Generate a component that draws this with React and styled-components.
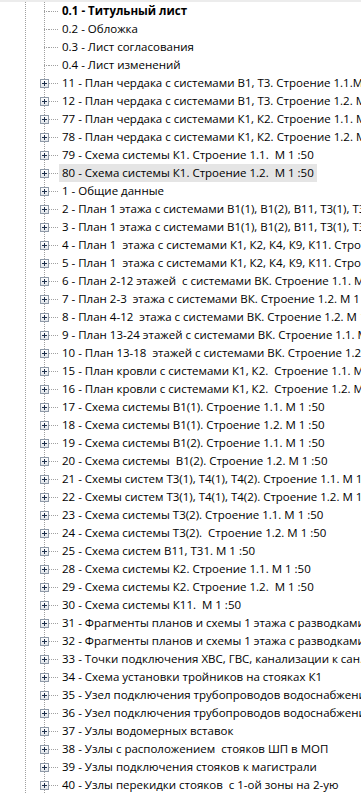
import React from "react";
import styled, { createGlobalStyle } from "styled-components";

const GlobalStyle = createGlobalStyle`
  html, body {
    margin: 0;
    padding: 0;
    background: #ffffff;
    overflow: hidden;
  }
`;

const Browser = styled.div`
  width: 361px;
  height: 795px;
  overflow: hidden;
  background: #ffffff;
  font-family: "Open Sans", "Noto Sans", sans-serif;
  font-size: 11.5px;
  color: #000000;
`;

const TopEdge = styled.div`
  height: 2px;
  background: #ececec;
`;

const Tree = styled.div`
  display: flex;
  flex-direction: column;
  background-image:
    linear-gradient(to bottom, #a0a0a0 50%, transparent 50%),
    linear-gradient(to bottom, #a0a0a0 50%, transparent 50%);
  background-size: 1px 2px, 1px 2px;
  background-repeat: repeat-y, repeat-y;
  background-position: 25px 0, 44px 0;
`;

const Row = styled.div`
  display: flex;
  align-items: center;
  height: 18px;
  padding-left: 40px;
  white-space: pre;
`;

const Expander = styled.div`
  width: 9px;
  height: 9px;
  flex: none;
  box-sizing: border-box;
  border: 1px solid #8f9aa8;
  background: linear-gradient(to bottom, #ffffff, #e2e6ea);
  display: flex;
  align-items: center;
  justify-content: center;

  svg {
    display: block;
  }
`;

const LeafStub = styled.div`
  width: 9px;
  height: 1px;
  flex: none;
  background-image: linear-gradient(to right, #a0a0a0 50%, transparent 50%);
  background-size: 2px 1px;
  background-repeat: repeat-x;
  background-position: 4px 0;
  background-clip: content-box;
  padding-left: 4px;
  box-sizing: border-box;
`;

const Connector = styled.div`
  width: 10px;
  height: 1px;
  flex: none;
  background-image: linear-gradient(to right, #a0a0a0 50%, transparent 50%);
  background-size: 2px 1px;
  background-repeat: repeat-x;
`;

const Label = styled.div`
  height: 18px;
  line-height: 18px;
  padding: 0 3px;
  font-weight: ${(p) => (p.$bold ? 700 : 400)};
  background: ${(p) => (p.$selected ? "#e5e5e5" : "transparent")};
`;

const PlusIcon = () => (
  <svg width="7" height="7" viewBox="0 0 7 7">
    <rect x="1" y="3" width="5" height="1" fill="#1c2e4a" />
    <rect x="3" y="1" width="1" height="5" fill="#1c2e4a" />
  </svg>
);

const sheets = [
  { text: "0.1 - Титульный лист", leaf: true, bold: true },
  { text: "0.2 - Обложка", leaf: true },
  { text: "0.3 - Лист согласования", leaf: true },
  { text: "0.4 - Лист изменений", leaf: true },
  { text: "11 - План чердака с системами В1, Т3. Строение 1.1.М 1 :50" },
  { text: "12 - План чердака с системами В1, Т3. Строение 1.2. М 1 :50" },
  { text: "77 - План чердака с системами К1, К2. Строение 1.1. М 1 :50" },
  { text: "78 - План чердака с системами К1, К2. Строение 1.2. М 1 :50" },
  { text: "79 - Схема системы К1. Строение 1.1.  М 1 :50" },
  { text: "80 - Схема системы К1. Строение 1.2.  М 1 :50", selected: true },
  { text: "1 - Общие данные" },
  { text: "2 - План 1 этажа с системами В1(1), В1(2), В11, Т3(1), Т3(2)" },
  { text: "3 - План 1 этажа с системами В1(1), В1(2), В11, Т3(1), Т3(2)" },
  { text: "4 - План 1  этажа с системами К1, К2, К4, К9, К11. Строение 1.1." },
  { text: "5 - План 1  этажа с системами К1, К2, К4, К9, К11. Строение 1.2." },
  { text: "6 - План 2-12 этажей  с системами ВК. Строение 1.1. М 1 :50" },
  { text: "7 - План 2-3  этажа с системами ВК. Строение 1.2. М 1 :50" },
  { text: "8 - План 4-12  этажа с системами ВК. Строение 1.2. М 1 :50" },
  { text: "9 - План 13-24 этажей с системами ВК. Строение 1.1. М 1 :50" },
  { text: "10 - План 13-18  этажей с системами ВК. Строение 1.2. М 1 :50" },
  { text: "15 - План кровли с системами К1, К2.  Строение 1.1. М 1 :50" },
  { text: "16 - План кровли с системами К1, К2.  Строение 1.2. М 1 :50" },
  { text: "17 - Схема системы В1(1). Строение 1.1. М 1 :50" },
  { text: "18 - Схема системы В1(1). Строение 1.2. М 1 :50" },
  { text: "19 - Схема системы В1(2). Строение 1.1. М 1 :50" },
  { text: "20 - Схема системы  В1(2). Строение 1.2. М 1 :50" },
  { text: "21 - Схемы систем Т3(1), Т4(1), Т4(2). Строение 1.1. М 1 :50" },
  { text: "22 - Схемы систем Т3(1), Т4(1), Т4(2). Строение 1.2. М 1 :50" },
  { text: "23 - Схема системы Т3(2). Строение 1.1. М 1 :50" },
  { text: "24 - Схема системы Т3(2).  Строение 1.2. М 1 :50" },
  { text: "25 - Схема систем В11, Т31. М 1 :50" },
  { text: "28 - Схема системы К2. Строение 1.1. М 1 :50" },
  { text: "29 - Схема системы К2. Строение 1.2.  М 1 :50" },
  { text: "30 - Схема системы К11.  М 1 :50" },
  { text: "31 - Фрагменты планов и схемы 1 этажа с разводками" },
  { text: "32 - Фрагменты планов и схемы 1 этажа с разводками" },
  { text: "33 - Точки подключения ХВС, ГВС, канализации к сан. приборам" },
  { text: "34 - Схема установки тройников на стояках К1" },
  { text: "35 - Узел подключения трубопроводов водоснабжения" },
  { text: "36 - Узел подключения трубопроводов водоснабжения" },
  { text: "37 - Узлы водомерных вставок" },
  { text: "38 - Узлы с расположением  стояков ШП в МОП" },
  { text: "39 - Узлы подключения стояков к магистрали" },
  { text: "40 - Узлы перекидки стояков  с 1-ой зоны на 2-ую" },
];

export default function App() {
  return (
    <Browser>
      <GlobalStyle />
      <TopEdge />
      <Tree>
        {sheets.map((s) => (
          <Row key={s.text}>
            {s.leaf ? (
              <LeafStub />
            ) : (
              <Expander>
                <PlusIcon />
              </Expander>
            )}
            <Connector />
            <Label $bold={s.bold} $selected={s.selected}>
              {s.text}
            </Label>
          </Row>
        ))}
      </Tree>
    </Browser>
  );
}
